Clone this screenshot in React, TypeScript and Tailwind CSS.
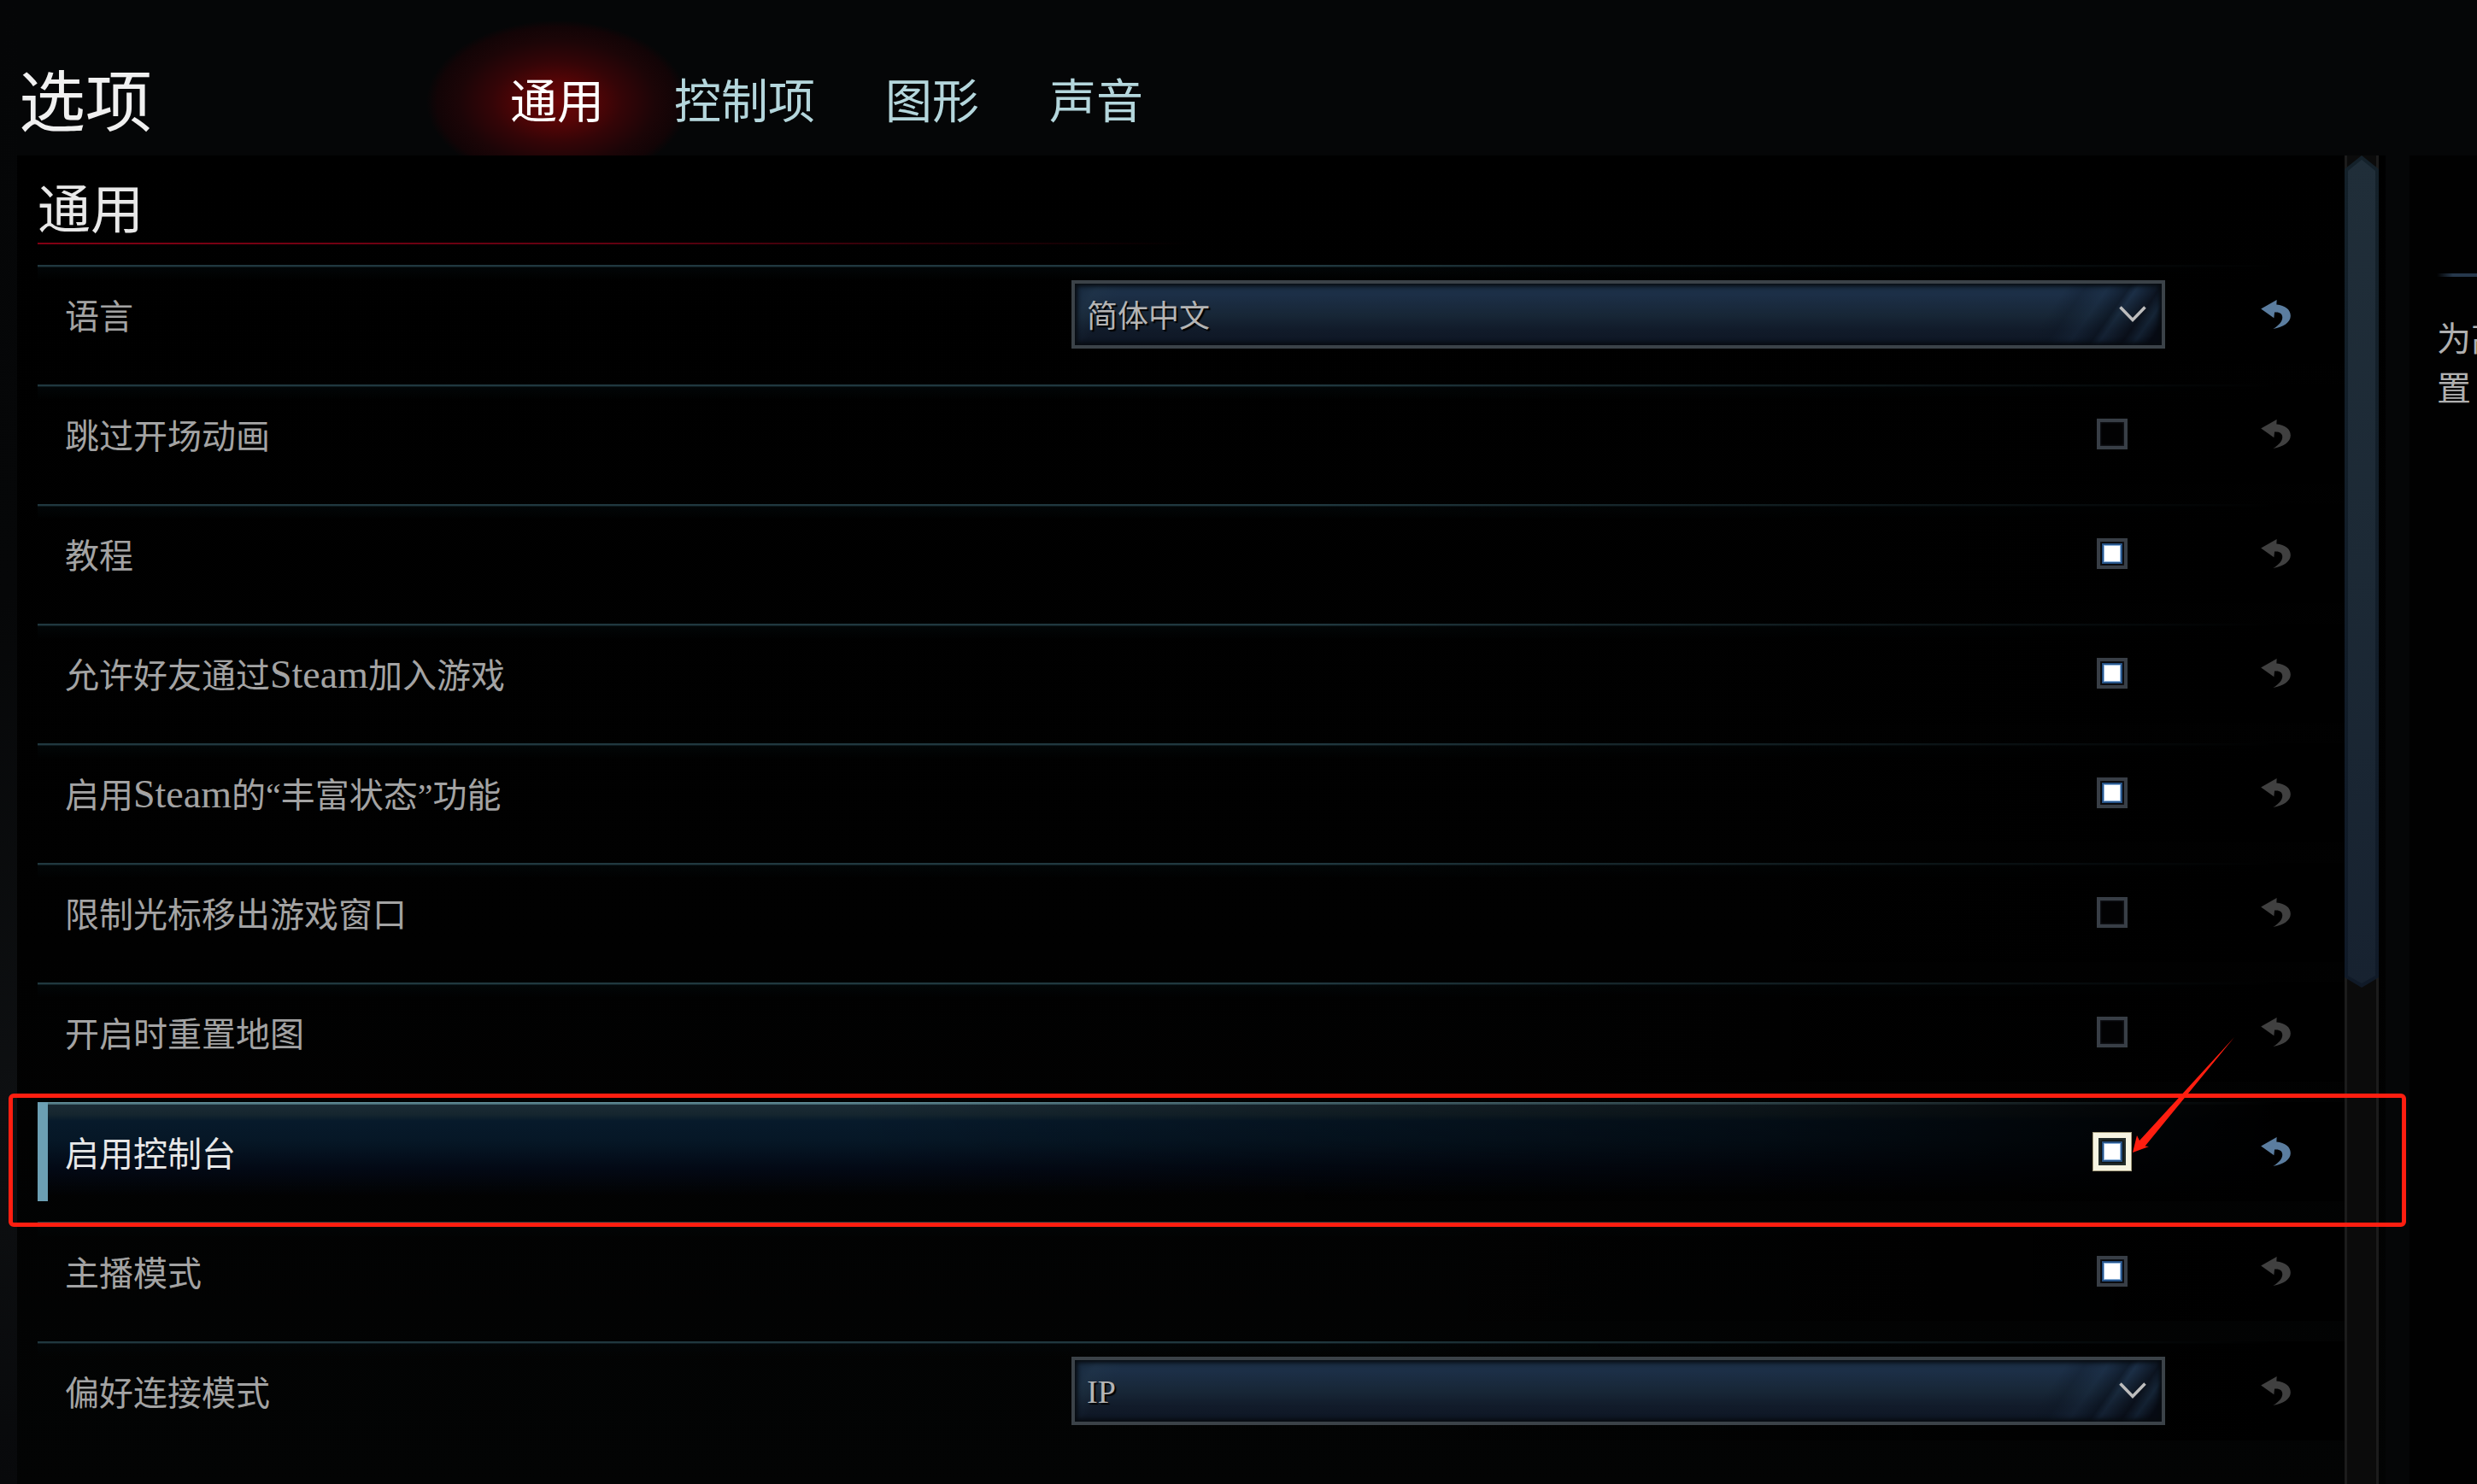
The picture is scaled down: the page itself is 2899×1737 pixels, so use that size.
import { useState } from "react";
import clsx from "clsx";

type Option = {
  id: string;
  label: string;
  type: "select" | "checkbox";
  value?: string;
  checked?: boolean;
  changed?: boolean;
};

const tabs = ["通用", "控制项", "图形", "声音"];

const options: Option[] = [
  { id: "language", label: "语言", type: "select", value: "简体中文", changed: true },
  { id: "skip-intro", label: "跳过开场动画", type: "checkbox" },
  { id: "tutorial", label: "教程", type: "checkbox", checked: true },
  { id: "steam-join", label: "允许好友通过Steam加入游戏", type: "checkbox", checked: true },
  { id: "rich-presence", label: "启用Steam的“丰富状态”功能", type: "checkbox", checked: true },
  { id: "lock-cursor", label: "限制光标移出游戏窗口", type: "checkbox" },
  { id: "reset-map", label: "开启时重置地图", type: "checkbox" },
  { id: "console", label: "启用控制台", type: "checkbox", checked: true, changed: true },
  { id: "streamer", label: "主播模式", type: "checkbox", checked: true },
  { id: "connection", label: "偏好连接模式", type: "select", value: "IP" },
];

const SELECTED = "console";

export default function App() {
  const [activeTab, setActiveTab] = useState("通用");

  return (
    <div className="flex min-h-screen flex-col overflow-hidden bg-[#050607] bg-[linear-gradient(180deg,#050607_0%,#060708_40%,#0e1012_75%,#08090b_100%)] bg-[length:20px_100%] bg-no-repeat font-['Liberation_Serif','Noto_Sans_CJK_SC',sans-serif] text-[#a3a3a3]">
      <header className="isolate flex h-[182px] items-center pt-14 pl-[22px]">
        <div className="flex h-[128px] items-center">
          <h1 className="w-[575px] pt-1.5 text-[78px] leading-none text-[#f0f0f0]">选项</h1>
          <nav className="flex gap-[82px]">
            {tabs.map((tab) => (
              <button
                key={tab}
                onClick={() => setActiveTab(tab)}
                className={clsx(
                  "relative text-[55px] leading-none",
                  tab === activeTab ? "text-white" : "text-[#b4d6dc]",
                )}
              >
                {tab === activeTab && (
                  <span className="absolute -inset-x-[98px] -inset-y-[68px] -z-10 bg-[radial-gradient(closest-side,#6c0406_0%,#560506_25%,#340507_50%,#1c0507_75%,#120406_92%,#08050600_100%)]" />
                )}
                {tab}
              </button>
            ))}
          </nav>
        </div>
      </header>

      <div className="relative z-10 flex flex-1 gap-7 pl-5">
        <main className="flex min-w-0 flex-1 bg-[linear-gradient(180deg,#000_0%,#010101_60%,#030404_100%)] pr-2 pl-6">
          <section className="min-w-0 flex-1">
            <h2 className="flex h-[102px] items-center pt-7 text-[62px] leading-none text-[#e8e8e8]">
              通用
            </h2>
            <div className="mb-6 h-0.5 w-1/2 bg-linear-to-r from-[#820013] via-[#620010] to-transparent" />
            <div>
              {options.map((option) => (
                <OptionRow key={option.id} option={option} selected={option.id === SELECTED} />
              ))}
            </div>
          </section>
          <Scrollbar />
        </main>

        <aside className="w-[79px] shrink-0 overflow-hidden bg-[#010101] pt-[138px] pl-8">
          <div className="h-1 bg-linear-to-r from-transparent to-[#26384c] to-40%" />
          <p className="pt-[45px] text-[40px] leading-[58px] whitespace-nowrap text-[#b0b0b0]">
            为高
            <br />置
          </p>
        </aside>
      </div>
    </div>
  );
}

function OptionRow({ option, selected }: { option: Option; selected: boolean }) {
  return (
    <div className="relative h-[140px]">
      <div
        className={clsx(
          "grid h-[116px] grid-cols-[121fr_128fr_21fr] items-center",
          selected
            ? "bg-[linear-gradient(90deg,#6c9fb3_12px,transparent_12px),linear-gradient(90deg,transparent_0%,transparent_35%,#00000080_75%,#000_97%),linear-gradient(180deg,#6d9ca8_0px,#3d5c66_3px,#1a2a34_3px,#16262f_14px,#071a2b_22px,#061726_46px,#030915_78px,transparent_110px)]"
            : "bg-[linear-gradient(90deg,transparent_0%,transparent_55%,#000_97%),linear-gradient(180deg,#20383f_0px,#20383f_2px,#0e1a1e_2px,#0e1a1e_3px,#020607_3px,transparent_18px)]",
        )}
      >
        <label
          htmlFor={option.id}
          className={clsx("pt-2 pl-8 text-[40px] leading-none", selected && "text-[#e8e8e8]")}
        >
          <MixedText text={option.label} />
        </label>

        {option.type === "select" ? (
          <Dropdown id={option.id} value={option.value ?? ""} />
        ) : (
          <div className="flex w-[124px] items-center justify-center justify-self-end">
            <Checkbox id={option.id} defaultChecked={option.checked} selected={selected} />
          </div>
        )}

        <button
          aria-label="重置"
          className={clsx(
            "mr-[63px] justify-self-end",
            option.changed ? "text-[#5b7d9f]" : "text-[#404040]",
          )}
        >
          <UndoIcon />
        </button>
      </div>

      {selected && (
        <>
          <div className="pointer-events-none absolute -top-[10px] -right-[72px] -bottom-[6px] -left-[34px] z-10 rounded-md border-5 border-[#ff1e10]" />
          <Arrow />
        </>
      )}
    </div>
  );
}

// latin glyphs run smaller than the chinese ones, so they get a larger size
function MixedText({ text }: { text: string }) {
  return text.split(/([A-Za-z]+)/).map((part, i) =>
    i % 2 ? (
      <span key={i} className="text-[46px] leading-8">
        {part}
      </span>
    ) : (
      part
    ),
  );
}

function Dropdown({ id, value }: { id: string; value: string }) {
  return (
    <div className="relative">
      <select
        id={id}
        className={clsx(
          "block h-20 w-full appearance-none border-4 border-[#3b4248] bg-[linear-gradient(125deg,#15263a_0px,#22374a60_24px,#14243600_50px),linear-gradient(125deg,transparent_calc(100%-130px),#0c162450_calc(100%-112px),#1b2f4650_calc(100%-90px),#08101c90_calc(100%-70px),#1b2f4660_calc(100%-62px),#070b14c0_calc(100%-40px),#142436a0_calc(100%-28px),#070b14_calc(100%-14px)),linear-gradient(180deg,#1b2f45_0%,#1c2f47_18%,#172636_52%,#111b2a_75%,#0e1624_100%)] pl-3.5 text-[#b4b4b4] shadow-[inset_0_0_5px_3px_#070b10] text-shadow-[2px_2px_1px_#000]",
          /^[A-Z]+$/.test(value) ? "pt-0.5 text-[38px]" : "pt-1.5 text-[36px]",
        )}
      >
        <option>{value}</option>
      </select>
      <svg
        viewBox="0 0 32 20"
        className="pointer-events-none absolute top-[30px] right-[22px] h-5 w-8"
        fill="none"
        stroke="#bdbdbd"
        strokeWidth="3.5"
      >
        <path d="M1.5 1.5 16 16.5 30.5 1.5" />
      </svg>
    </div>
  );
}

type CheckboxProps = { id: string; defaultChecked?: boolean; selected: boolean };

function Checkbox({ id, defaultChecked, selected }: CheckboxProps) {
  return (
    <input
      id={id}
      type="checkbox"
      defaultChecked={defaultChecked}
      className={clsx(
        "appearance-none bg-[#020203] bg-center bg-no-repeat checked:bg-[linear-gradient(#fff,#fff),linear-gradient(#8fb4dc,#8fb4dc),linear-gradient(#28568c,#28568c)] checked:bg-[length:18px_18px,20px_20px,24px_24px]",
        selected
          ? "size-[46px] border-7 border-[#f6f4e2] shadow-[inset_0_0_3px_3px_#26302f] outline-1 -outline-offset-1 outline-[#a39c7c]"
          : "size-9 border-4 border-[#383e46] shadow-[inset_0_0_2px_1px_#14161c]",
      )}
    />
  );
}

function Scrollbar() {
  return (
    <div className="w-10 shrink-0 border-x-3 border-[#1c1c1c] bg-[#0b0b0b]">
      <div className="-mx-[3px] h-[974px] bg-linear-to-b from-[#14212a] to-[#101a28] px-1 py-[5px] [clip-path:polygon(50%_0,100%_16px,100%_calc(100%-12px),50%_100%,0_calc(100%-12px),0_16px)]">
        <div className="h-full bg-linear-to-b from-[#202e39] via-[#1c2935] to-[#172230] [clip-path:polygon(50%_0,100%_13px,100%_calc(100%-9px),50%_100%,0_calc(100%-9px),0_13px)]" />
      </div>
    </div>
  );
}

function UndoIcon() {
  return (
    <svg viewBox="0 0 105 103" className="h-[34px] w-[35px]" fill="currentColor">
      <path d="M0 32 56 0 55 17C86 20 105 35 105 57 105 80 80 97 43 103 64 90 76 76 76 62 76 49 66 42 48 44L46 64Z" />
    </svg>
  );
}

function Arrow() {
  return (
    <svg
      viewBox="0 0 121 137"
      className="pointer-events-none absolute -top-[77px] right-[128px] z-10 h-[137px] w-[121px]"
      fill="#ff1e10"
    >
      <path d="M120 1 15.500 128.500 20 129 1 136 6 116 9 122Z" />
    </svg>
  );
}
